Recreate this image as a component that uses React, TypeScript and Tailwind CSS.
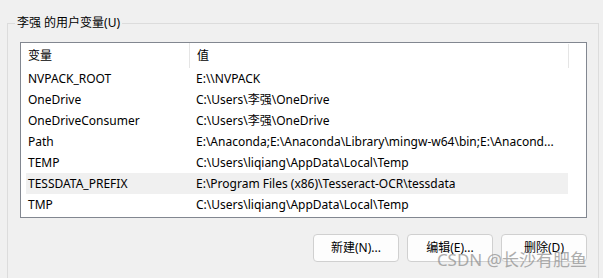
import React from "react";

const rows = [
  { name: "NVPACK_ROOT", value: "E:\\\\NVPACK" },
  { name: "OneDrive", value: "C:\\Users\\李强\\OneDrive" },
  { name: "OneDriveConsumer", value: "C:\\Users\\李强\\OneDrive" },
  {
    name: "Path",
    value: "E:\\Anaconda;E:\\Anaconda\\Library\\mingw-w64\\bin;E:\\Anacond...",
  },
  { name: "TEMP", value: "C:\\Users\\liqiang\\AppData\\Local\\Temp" },
  { name: "TESSDATA_PREFIX", value: "E:\\Program Files (x86)\\Tesseract-OCR\\tessdata" },
  { name: "TMP", value: "C:\\Users\\liqiang\\AppData\\Local\\Temp" },
];

const buttons = ["新建(N)...", "编辑(E)...", "删除(D)"];

export default function App() {
  return (
    <div
      className="relative w-[603px] h-[278px] overflow-hidden bg-[#f0f0f0] text-[12px] text-black pt-[23px] pl-[7px]"
      style={{ fontFamily: '"Noto Sans", "Noto Sans CJK SC", sans-serif' }}
    >
      {/* group box */}
      <div className="relative w-[592px] h-[300px] border border-[#dcdcdc] pt-[18px] pl-[12px]">
        <span className="absolute left-[7px] -top-[9px] bg-[#f0f0f0] px-[2px] leading-[16px]">
          李强 的用户变量(U)
        </span>

        {/* list view */}
        <div className="w-[567px] h-[176px] border border-[#828790] bg-white">
          <div className="ml-[5px] w-[542px] h-[25px] grid grid-cols-[163px_1fr] items-center">
            <div className="pl-[2px]">变量</div>
            <div className="relative h-full flex items-center pl-[7px] border-l border-[#e5e5e5]">
              值
              <span className="absolute -right-[1px] top-[1px] h-[24px] w-px bg-[#e5e5e5]" />
            </div>
          </div>
          {rows.map((r) => (
            <div
              key={r.name}
              className={`ml-[5px] w-[542px] h-[21px] grid grid-cols-[163px_1fr] items-center whitespace-nowrap ${
                r.name === "TESSDATA_PREFIX" ? "bg-[#f0f0f0]" : ""
              }`}
            >
              <div className="pl-[2px]">{r.name}</div>
              <div className="pl-[7px] overflow-hidden">{r.value}</div>
            </div>
          ))}
        </div>

        {/* buttons */}
        <div className="w-[567px] mt-[16px] flex justify-end gap-[8px]">
          {buttons.map((b) => (
            <button
              key={b}
              className="w-[86px] h-[28px] rounded-[4px] border border-[#d0d0d0] bg-[#fdfdfd] text-[12px]"
            >
              {b}
            </button>
          ))}
        </div>
      </div>

      {/* watermark */}
      <span
        className="absolute right-[16px] bottom-[9px] text-[17px] leading-[19px] text-[#8c8c8c] opacity-70"
        style={{ fontFamily: '"Noto Sans", "Noto Sans CJK SC", sans-serif' }}
      >
        CSDN @长沙有肥鱼
      </span>
    </div>
  );
}
